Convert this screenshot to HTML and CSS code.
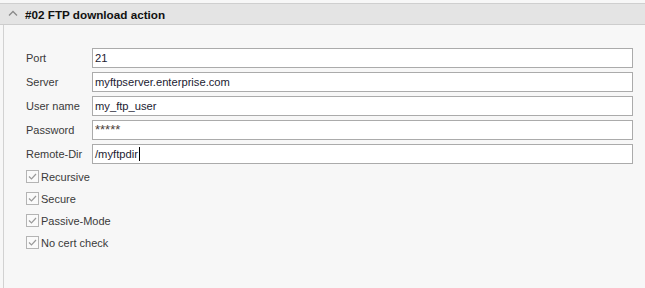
FILE: index.html
```html
<!DOCTYPE html>
<html lang="en">
<head>
  <meta charset="UTF-8">
  <title>FTP download action</title>
  <link rel="stylesheet" href="styles.css">
</head>
<body>
  <div class="panel">
    <div class="panel-head">
      <svg class="chevron" width="10" height="6" viewBox="0 0 10 6"><path d="M1 5.5 L5 1.5 L9 5.5" fill="none" stroke="#8a8a8a" stroke-width="1.3"/></svg>
      <span class="title">#02 FTP download action</span>
    </div>
    <div class="panel-body">
      <form class="fields">
        <label for="port">Port</label>
        <input type="text" id="port" value="21">
        <label for="server">Server</label>
        <input type="text" id="server" value="myftpserver.enterprise.com">
        <label for="user">User name</label>
        <input type="text" id="user" value="my_ftp_user">
        <label for="pass">Password</label>
        <input type="text" id="pass" class="stars" value="*****">
        <label for="dir">Remote-Dir</label>
        <div class="fake-input">/myftpdir<span class="caret"></span></div>
      </form>
      <div class="checks">
        <div class="check"><span class="box"><svg width="11" height="11" viewBox="0 0 11 11"><path d="M2 5.5 L4.5 8 L9 3" fill="none" stroke="#9a9a9a" stroke-width="1.2"/></svg></span>Recursive</div>
        <div class="check"><span class="box"><svg width="11" height="11" viewBox="0 0 11 11"><path d="M2 5.5 L4.5 8 L9 3" fill="none" stroke="#9a9a9a" stroke-width="1.2"/></svg></span>Secure</div>
        <div class="check"><span class="box"><svg width="11" height="11" viewBox="0 0 11 11"><path d="M2 5.5 L4.5 8 L9 3" fill="none" stroke="#9a9a9a" stroke-width="1.2"/></svg></span>Passive-Mode</div>
        <div class="check"><span class="box"><svg width="11" height="11" viewBox="0 0 11 11"><path d="M2 5.5 L4.5 8 L9 3" fill="none" stroke="#9a9a9a" stroke-width="1.2"/></svg></span>No cert check</div>
      </div>
    </div>
  </div>
</body>
</html>
```

FILE: styles.css
```css
*{box-sizing:border-box;margin:0;padding:0;}
body{
  background:#f7f7f7;
  font-family:"Liberation Sans",Arial,sans-serif;
  font-size:11px;
  color:#333;
  height:288px;
  overflow:hidden;
}
.panel{
  margin-top:3px;
  border-top:1px solid #cfcfcf;
  height:285px;
  display:flex;
  flex-direction:column;
}
.panel-head{
  height:21px;
  background:#e4e4e4;
  border-bottom:1px solid #cdcdcd;
  display:flex;
  align-items:center;
  padding-left:8px;
  gap:7px;
}
.chevron{margin-top:-2px;}
.title{
  font-weight:bold;
  font-size:11.7px;
  color:#111;
}
.panel-body{
  flex:1;
  margin-left:3px;
  border-left:1px solid #d2d2d2;
  padding:23px 12px 0 22px;
}
.fields{
  display:grid;
  grid-template-columns:66px 1fr;
  row-gap:4px;
  align-items:center;
}
label{color:#3a3a3a;}
input,.fake-input{
  height:20px;
  width:100%;
  border:1px solid #ababab;
  background:#fff;
  padding:0 2px;
  font:inherit;
  font-size:11.2px;
  color:#222232;
  outline:none;
}
.stars{font-size:13px;color:#4a4038;padding-bottom:2px;}
.fake-input{
  display:flex;
  align-items:center;
}
.caret{
  display:inline-block;
  width:1px;
  height:14px;
  background:#000;
  margin-left:1px;
}
.checks{
  margin-top:6px;
  display:flex;
  flex-direction:column;
  gap:9px;
}
.check{
  display:flex;
  align-items:center;
  gap:2px;
  height:13px;
  color:#3a3a3a;
}
.box{
  width:13px;
  height:13px;
  border:1px solid #b4b4b4;
  background:#fafafa;
  display:flex;
  align-items:center;
  justify-content:center;
}
```
